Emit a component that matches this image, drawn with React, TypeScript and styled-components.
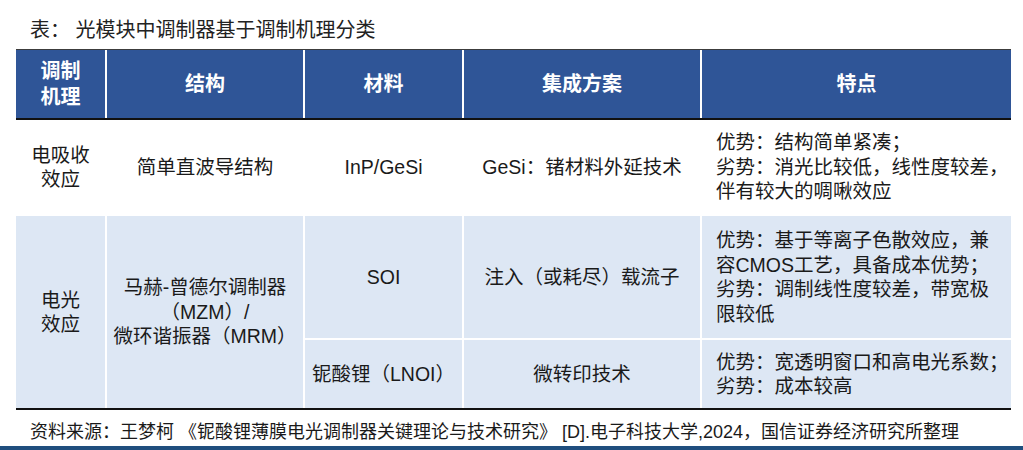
import styled, { createGlobalStyle } from "styled-components";

const GlobalStyle = createGlobalStyle`
    html, body {
        margin: 0;
        padding: 0;
        background: #ffffff;
    }
    body {
        font-family: "Liberation Sans", "Noto Sans CJK SC", sans-serif;
        color: #1a1a1a;
    }
`;

const COLUMNS = "89px 196px 157px 236px 309px";

const Page = styled.div`
    width: 1023px;
    height: 450px;
    display: flex;
    flex-direction: column;
    overflow: hidden;
`;

const Title = styled.div`
    height: 49px;
    box-sizing: border-box;
    padding: 17px 0 6px 30px;
    font-size: 20px;
    line-height: 26px;
    color: #222222;
    white-space: pre;
`;

const Table = styled.div`
    margin-left: 16px;
    width: 995px;
`;

const HeaderRow = styled.div`
    display: grid;
    grid-template-columns: ${COLUMNS};
    grid-template-rows: 68px;
    column-gap: 2px;
    background: #ffffff;
    border-top: 1px solid #3c3c3c;
    border-bottom: 2px solid #111111;
`;

const HeadCell = styled.div`
    background: #2f5597;
    color: #ffffff;
    font-weight: bold;
    font-size: 20px;
    line-height: 26px;
    display: flex;
    align-items: center;
    justify-content: center;
    text-align: center;
`;

const Body = styled.div`
    display: grid;
    grid-template-columns: ${COLUMNS};
    grid-template-rows: 94px 122px 68px;
    gap: 2px;
    background: #ffffff;
    border-bottom: 2px solid #111111;
`;

interface CellProps {
    $row: number;
    $col: number;
    $span?: number;
    $tone: "white" | "blue";
    $left?: boolean;
}

const Cell = styled.div<CellProps>`
    grid-row: ${p => p.$row} / span ${p => p.$span ?? 1};
    grid-column: ${p => p.$col};
    background: ${p => (p.$tone === "blue" ? "#dde7f4" : "#ffffff")};
    font-size: 19.5px;
    line-height: 24.5px;
    display: flex;
    align-items: center;
    justify-content: ${p => (p.$left ? "flex-start" : "center")};
    text-align: ${p => (p.$left ? "left" : "center")};
    padding-left: ${p => (p.$left ? "14px" : "0")};
    white-space: nowrap;
`;

const Footer = styled.div`
    padding: 10px 0 0 30px;
    font-size: 18px;
    line-height: 24px;
    color: #1a1a1a;
    white-space: pre;
`;

const Spacer = styled.div`
    flex: 1;
`;

const BottomStrip = styled.div`
    height: 4px;
    background: #1f4e7e;
`;

const headers = [
    <>调制<br />机理</>,
    "结构",
    "材料",
    "集成方案",
    "特点",
];

export default function App() {
    return (
        <Page>
            <GlobalStyle />
            <Title>表： 光模块中调制器基于调制机理分类</Title>
            <Table>
                <HeaderRow>
                    {headers.map((h, i) => (
                        <HeadCell key={i}>{h}</HeadCell>
                    ))}
                </HeaderRow>
                <Body>
                    <Cell $row={1} $col={1} $tone="white">电吸收<br />效应</Cell>
                    <Cell $row={1} $col={2} $tone="white">简单直波导结构</Cell>
                    <Cell $row={1} $col={3} $tone="white">InP/GeSi</Cell>
                    <Cell $row={1} $col={4} $tone="white">GeSi：锗材料外延技术</Cell>
                    <Cell $row={1} $col={5} $tone="white" $left>
                        <div>
                            优势：结构简单紧凑；<br />
                            劣势：消光比较低，线性度较差，<br />
                            伴有较大的啁啾效应
                        </div>
                    </Cell>

                    <Cell $row={2} $span={2} $col={1} $tone="blue">电光<br />效应</Cell>
                    <Cell $row={2} $span={2} $col={2} $tone="blue">
                        <div>
                            马赫-曾德尔调制器<br />
                            （MZM）/<br />
                            微环谐振器（MRM）
                        </div>
                    </Cell>
                    <Cell $row={2} $col={3} $tone="blue">SOI</Cell>
                    <Cell $row={2} $col={4} $tone="blue">注入（或耗尽）载流子</Cell>
                    <Cell $row={2} $col={5} $tone="blue" $left>
                        <div>
                            优势：基于等离子色散效应，兼<br />
                            容CMOS工艺，具备成本优势；<br />
                            劣势：调制线性度较差，带宽极<br />
                            限较低
                        </div>
                    </Cell>

                    <Cell $row={3} $col={3} $tone="blue">铌酸锂（LNOI）</Cell>
                    <Cell $row={3} $col={4} $tone="blue">微转印技术</Cell>
                    <Cell $row={3} $col={5} $tone="blue" $left>
                        <div>
                            优势：宽透明窗口和高电光系数；<br />
                            劣势：成本较高
                        </div>
                    </Cell>
                </Body>
            </Table>
            <Footer>资料来源：王梦柯 《铌酸锂薄膜电光调制器关键理论与技术研究》 [D].电子科技大学,2024，国信证券经济研究所整理</Footer>
            <Spacer />
            <BottomStrip />
        </Page>
    );
}
